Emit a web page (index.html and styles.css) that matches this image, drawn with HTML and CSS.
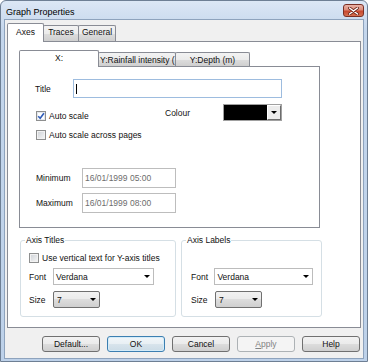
FILE: index.html
```html
<!DOCTYPE html>
<html lang="en">
<head>
    <meta charset="UTF-8">
    <title>Graph Properties</title>
    <link rel="stylesheet" href="styles.css">
</head>
<body>
    <div class="window">
        <div class="titlebar">
            <span class="caption">Graph Properties</span>
            <div class="close-btn">
                <svg width="11" height="8" viewBox="0 0 11 8">
                    <path d="M1.5 1L9.5 7M9.5 1L1.5 7" stroke="#6b2418" stroke-width="3" stroke-linecap="round"/>
                    <path d="M1.5 1L9.5 7M9.5 1L1.5 7" stroke="#fff" stroke-width="1.5" stroke-linecap="round"/>
                </svg>
            </div>
        </div>

        <div class="client">
            <div class="tabstrip">
                <div class="tab active tab-axes">Axes</div>
                <div class="tab tab-traces">Traces</div>
                <div class="tab tab-general">General</div>
            </div>

            <div class="tabpage">
                <div class="tabstrip inner">
                    <div class="tab active tab-x">X:</div>
                    <div class="tab tab-rain">Y:Rainfall intensity (</div>
                    <div class="tab tab-depth">Y:Depth (m)</div>
                </div>

                <div class="axis-panel">
                    <div class="row title-row">
                        <span class="lbl lbl-title">Title</span>
                        <div class="textbox focused"><span class="caret"></span></div>
                    </div>

                    <div class="row scale-row">
                        <div class="check check-auto">
                            <span class="box">
                                <svg width="8" height="8" viewBox="0 0 8 8"><path d="M1.2 4.2L3.2 6.3L6.9 1.2" fill="none" stroke="#2f5cb8" stroke-width="1.6"/></svg>
                            </span>
                            Auto scale
                        </div>
                        <span class="lbl lbl-colour">Colour</span>
                        <div class="colour-pick">
                            <span class="swatch"></span>
                            <span class="pick-btn"><span class="arrow"></span></span>
                        </div>
                    </div>

                    <div class="check check-across">
                        <span class="box"></span>
                        Auto scale across pages
                    </div>

                    <div class="row range-row range-min">
                        <span class="lbl lbl-range">Minimum</span>
                        <div class="textbox disabled">16/01/1999 05:00</div>
                    </div>
                    <div class="row range-row range-max">
                        <span class="lbl lbl-range">Maximum</span>
                        <div class="textbox disabled">16/01/1999 08:00</div>
                    </div>
                </div>

                <div class="groups">
                    <fieldset class="group group-titles">
                        <legend>Axis Titles</legend>
                        <div class="check check-vertical">
                            <span class="box"></span>
                            Use vertical text for Y-axis titles
                        </div>
                        <div class="row field-row font-row">
                            <span class="lbl lbl-field">Font</span>
                            <div class="combo combo-font">Verdana<span class="arrow"></span></div>
                        </div>
                        <div class="row field-row size-row">
                            <span class="lbl lbl-field">Size</span>
                            <div class="combo combo-size">7<span class="arrow"></span></div>
                        </div>
                    </fieldset>

                    <fieldset class="group group-labels">
                        <legend>Axis Labels</legend>
                        <div class="row field-row font-row first">
                            <span class="lbl lbl-field">Font</span>
                            <div class="combo combo-font">Verdana<span class="arrow"></span></div>
                        </div>
                        <div class="row field-row size-row">
                            <span class="lbl lbl-field">Size</span>
                            <div class="combo combo-size">7<span class="arrow"></span></div>
                        </div>
                    </fieldset>
                </div>
            </div>

            <div class="buttons">
                <div class="btn">Default...</div>
                <div class="btn default">OK</div>
                <div class="btn">Cancel</div>
                <div class="btn disabled"><u>A</u>pply</div>
                <div class="btn">Help</div>
            </div>
        </div>
    </div>
</body>
</html>
```

FILE: styles.css
```css
body {
    margin: 0;
    font-family: "Liberation Sans", Arial, sans-serif;
    font-size: 8.5px;
    color: #111;
    background: #fff;
}
.window {
    width: 368px;
    height: 362px;
    box-sizing: border-box;
    border: 1px solid #6e7f94;
    border-radius: 6px 6px 0 0;
    background: linear-gradient(#dce7f5, #c4d6ec 30px, #bdd1e9);
    padding: 0 3px 2px 3px;
    display: flex;
    flex-direction: column;
}

/* title bar */
.titlebar {
    height: 18px;
    display: flex;
    align-items: flex-start;
}
.caption {
    font-size: 9px;
    line-height: 10px;
    margin: 6px 0 0 2px;
    color: #000;
}
.close-btn {
    margin: 3px 0 0 auto;
    width: 21px;
    height: 13px;
    box-sizing: border-box;
    border: 1px solid #7a2f24;
    border-radius: 3px;
    background: linear-gradient(#eab2a6, #dc8b78 45%, #c8472f 55%, #d4704f);
    display: flex;
    align-items: center;
    justify-content: center;
}

/* client area */
.client {
    flex: 1;
    border: 1px solid #8ea3bd;
    background: #f0f0f0;
    padding: 3px 2px 0 2px;
    display: flex;
    flex-direction: column;
}

/* tabs */
.tabstrip {
    height: 18px;
    display: flex;
    align-items: flex-end;
}
.tab {
    box-sizing: border-box;
    height: 16px;
    border: 1px solid #898c95;
    border-bottom: none;
    border-radius: 2px 2px 0 0;
    background: linear-gradient(#f3f3f3, #ebebeb 50%, #dddddd 50%, #cfcfcf);
    margin-left: -1px;
    padding-top: 1px;
    line-height: 10px;
    text-align: center;
    white-space: nowrap;
}
.tab.active {
    position: relative;
    z-index: 1;
    height: 19px;
    margin-bottom: -1px;
    padding-top: 3px;
    background: #fff;
}
.tab-axes { width: 37px; margin-left: 0; }
.tab-traces { width: 36px; }
.tab-general { width: 38px; }

.tabpage {
    height: 287px;
    box-sizing: border-box;
    border: 1px solid #898c95;
    background: #fff;
    padding: 8px 0 0 11px;
}
.tabstrip.inner {
    height: 16px;
}
.tabstrip.inner .tab {
    height: 14px;
    padding-top: 2px;
}
.tabstrip.inner .tab.active {
    height: 17px;
    padding-top: 2px;
}
.tab-x { width: 80px; margin-left: 0; }
.tab-rain { width: 78px; text-align: left; padding-left: 1px; }
.tab-depth { width: 75px; }

/* axis panel */
.axis-panel {
    width: 301px;
    height: 162px;
    box-sizing: border-box;
    border: 1px solid #898c95;
    background: #fff;
    padding-left: 15px;
}
.row {
    display: flex;
    align-items: center;
}
.lbl {
    line-height: 10px;
    white-space: nowrap;
}
.title-row {
    margin-top: 12px;
    height: 19px;
}
.lbl-title { width: 38px; }
.textbox {
    box-sizing: border-box;
    height: 100%;
    border: 1px solid #a9b9cb;
    background: #fff;
    display: flex;
    align-items: center;
    padding-left: 2px;
    line-height: 10px;
}
.textbox.focused {
    width: 209px;
    border-color: #9dbcdf;
}
.caret {
    width: 1px;
    height: 10px;
    background: #000;
}
.textbox.disabled {
    width: 94px;
    border-color: #bdbdbd;
    color: #6d6d6d;
}

.scale-row {
    margin-top: 6px;
    height: 17px;
    align-items: flex-start;
}
.check {
    display: flex;
    align-items: center;
    height: 12px;
    line-height: 10px;
    white-space: nowrap;
}
.box {
    width: 10px;
    height: 10px;
    box-sizing: border-box;
    border: 1px solid #8e8f8f;
    background: linear-gradient(135deg, #cdd1d6, #f7f7f7);
    box-shadow: inset 0 0 0 1px #f2f2f2;
    margin-right: 3px;
    display: flex;
    align-items: center;
    justify-content: center;
    flex-shrink: 0;
}
.check-auto {
    width: 129px;
    margin: 6px 0 0 1px;
}
.check-auto .box {
    background: #fff;
    box-shadow: inset 0 0 0 1px #e4e8ee;
}
.lbl-colour {
    width: 58px;
    margin-top: 4px;
}
.colour-pick {
    width: 59px;
    height: 17px;
    box-sizing: border-box;
    border: 1px solid #a0a0a0;
    display: flex;
}
.swatch {
    flex: 1;
    background: #000;
}
.pick-btn {
    width: 14px;
    box-sizing: border-box;
    background: #ececec;
    border-left: 1px solid #fff;
    border-top: 1px solid #fff;
    border-right: 1px solid #6d6d6d;
    border-bottom: 1px solid #6d6d6d;
    display: flex;
    align-items: center;
    justify-content: center;
}
.arrow {
    width: 0;
    height: 0;
    border-left: 3px solid transparent;
    border-right: 3px solid transparent;
    border-top: 3px solid #000;
}
.check-across {
    margin: 8px 0 0 1px;
}
.range-row {
    height: 20px;
}
.range-min { margin-top: 27px; }
.range-max { margin-top: 5px; }
.lbl-range {
    width: 46px;
    margin-left: 1px;
}

/* group boxes */
.groups {
    display: flex;
    margin: 7px 0 0 1px;
}
.group {
    box-sizing: border-box;
    margin: 0;
    min-width: 0;
    border: 1px solid #d5dfe5;
    border-radius: 3px;
    padding: 0 8px 8px 8px;
}
.group legend {
    line-height: 10px;
    padding: 0 1px;
    margin-left: -4px;
}
.group-titles { width: 156px; }
.group-labels {
    width: 141px;
    margin-left: 5px;
    padding-left: 9px;
}
.group-labels legend { margin-left: -5px; }
.check-vertical { margin-top: 7px; }
.field-row { height: 17px; }
.font-row { margin-top: 4px; }
.font-row.first { margin-top: 23px; }
.size-row { margin-top: 6px; }
.lbl-field { width: 24px; }
.combo {
    box-sizing: border-box;
    height: 17px;
    display: flex;
    align-items: center;
    justify-content: space-between;
    line-height: 10px;
}
.combo .arrow { margin-right: 3px; }
.combo-font {
    width: 101px;
    border: 1px solid #bcbcbc;
    background: #fff;
    padding-left: 2px;
}
.combo-size {
    width: 47px;
    border: 1px solid #707070;
    border-radius: 2px;
    background: linear-gradient(#f2f2f2, #ebebeb 50%, #dddddd 50%, #cfcfcf);
    padding-left: 3px;
}

/* buttons */
.buttons {
    margin-top: 8px;
    display: flex;
    justify-content: flex-end;
    gap: 7px;
    padding-right: 1px;
}
.btn {
    width: 58px;
    height: 16px;
    box-sizing: border-box;
    border: 1px solid #707070;
    border-radius: 3px;
    background: linear-gradient(#f2f2f2, #ebebeb 50%, #dddddd 50%, #cfcfcf);
    line-height: 14px;
    text-align: center;
}
.btn.default {
    border-color: #3c7fb1;
    box-shadow: inset 0 0 0 1px #d4ecf9;
    background: linear-gradient(#f1f6f9, #e8eff4 50%, #d8e4ec 50%, #cbdbe6);
}
.btn.disabled {
    border-color: #adb2b5;
    background: #f4f4f4;
    color: #838383;
}
```
